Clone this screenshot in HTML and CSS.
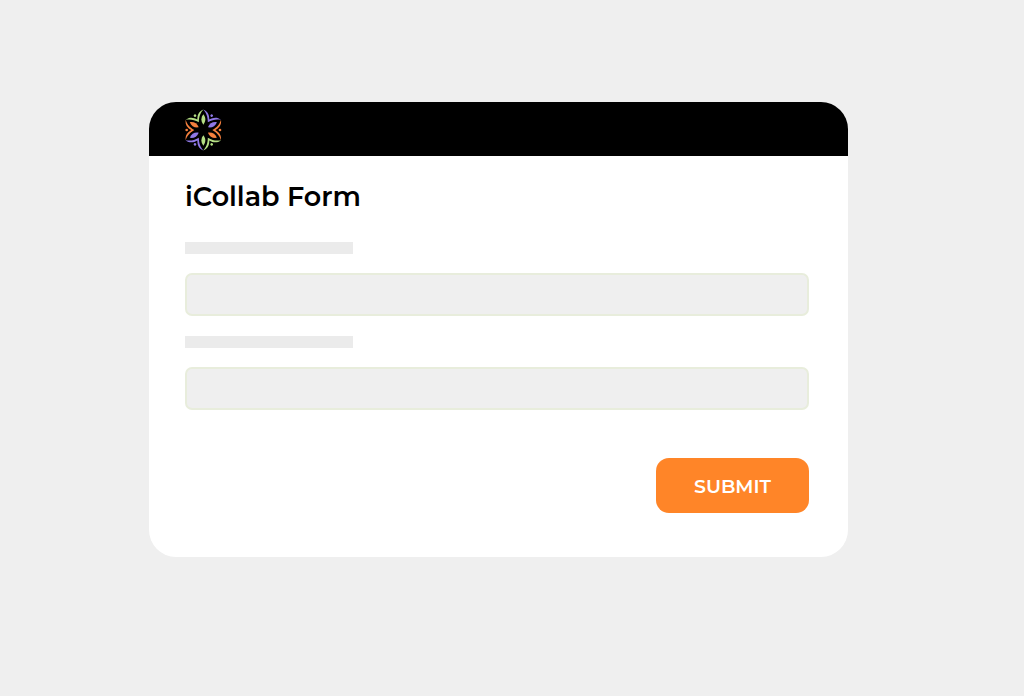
FILE: index.html
```html
<!DOCTYPE html>
<html lang="en">
<head>
<meta charset="utf-8">
<meta name="viewport" content="width=device-width, initial-scale=1">
<title>iCollab Form</title>
<link rel="stylesheet" href="styles.css">
</head>
<body>
<main class="page">
  <section class="card">
    <header class="card-header">
      <svg class="logo" viewBox="18 12 120 126" role="img" aria-label="iCollab">
        <defs>
          <path id="chevron" d="M23 44C21 59 28 68 40 75C28 82 21 91 23 106C27 93 34 84 49 75C34 66 27 57 23 44Z"/>
          <path id="petal" d="M76 28C84 38 84 49 76 59C68 49 68 38 76 28Z"/>
        </defs>
        <g class="orange">
          <use href="#chevron"/><circle cx="26" cy="75" r="4"/>
          <use href="#petal" transform="rotate(-60 76 75)"/>
        </g>
        <g class="green" transform="rotate(60 76 75)">
          <use href="#chevron"/><circle cx="26" cy="75" r="4"/>
          <use href="#petal" transform="rotate(-60 76 75)"/>
        </g>
        <g class="purple" transform="rotate(120 76 75)">
          <use href="#chevron"/><circle cx="26" cy="75" r="4"/>
          <use href="#petal" transform="rotate(-60 76 75)"/>
        </g>
        <g class="orange" transform="rotate(180 76 75)">
          <use href="#chevron"/><circle cx="26" cy="75" r="4"/>
          <use href="#petal" transform="rotate(-60 76 75)"/>
        </g>
        <g class="green" transform="rotate(240 76 75)">
          <use href="#chevron"/><circle cx="26" cy="75" r="4"/>
          <use href="#petal" transform="rotate(-60 76 75)"/>
        </g>
        <g class="purple" transform="rotate(300 76 75)">
          <use href="#chevron"/><circle cx="26" cy="75" r="4"/>
          <use href="#petal" transform="rotate(-60 76 75)"/>
        </g>
      </svg>
    </header>
    <form class="form">
      <h1 class="title">iCollab Form</h1>
      <label class="label" for="first"></label>
      <input class="field" id="first" type="text">
      <label class="label" for="second"></label>
      <input class="field" id="second" type="text">
      <button class="submit" type="button">SUBMIT</button>
    </form>
  </section>
</main>
</body>
</html>
```

FILE: styles.css
```css
* {
  box-sizing: border-box;
}

body {
  margin: 0;
  background: #efefef;
  font-family: Montserrat, Inter, sans-serif;
}

.page {
  padding: 102px 176px 102px 149px;
}

.card {
  overflow: hidden;
  border-radius: 27px;
  background: #fff;
}

.card-header {
  display: flex;
  padding: 7px 35px 5px;
  background: #000;
}

.logo {
  width: 40px;
  height: 42px;
}

.orange {
  fill: #f5803e;
}

.green {
  fill: #b4de84;
}

.purple {
  fill: #8f78e6;
}

.form {
  display: flex;
  flex-direction: column;
  align-items: flex-start;
  padding: 25px 39px 44px 36px;
}

.title {
  margin: 0 0 29px;
  color: #000;
  font-size: 27px;
  font-weight: 600;
  line-height: 32px;
}

.label {
  width: 168px;
  height: 12px;
  margin-bottom: 19px;
  background: #ebebeb;
}

.field {
  width: 100%;
  height: 43px;
  margin-bottom: 20px;
  padding: 0 12px;
  border: 2px solid #e8eddc;
  border-radius: 7px;
  background: #efefef;
  font: inherit;
}

.submit {
  align-self: flex-end;
  width: 153px;
  height: 55px;
  margin-top: 28px;
  padding: 2px 0 0;
  border: 0;
  border-radius: 13px;
  background: #ff8528;
  color: #fff;
  font: inherit;
  font-size: 19px;
  font-weight: 600;
}
```
